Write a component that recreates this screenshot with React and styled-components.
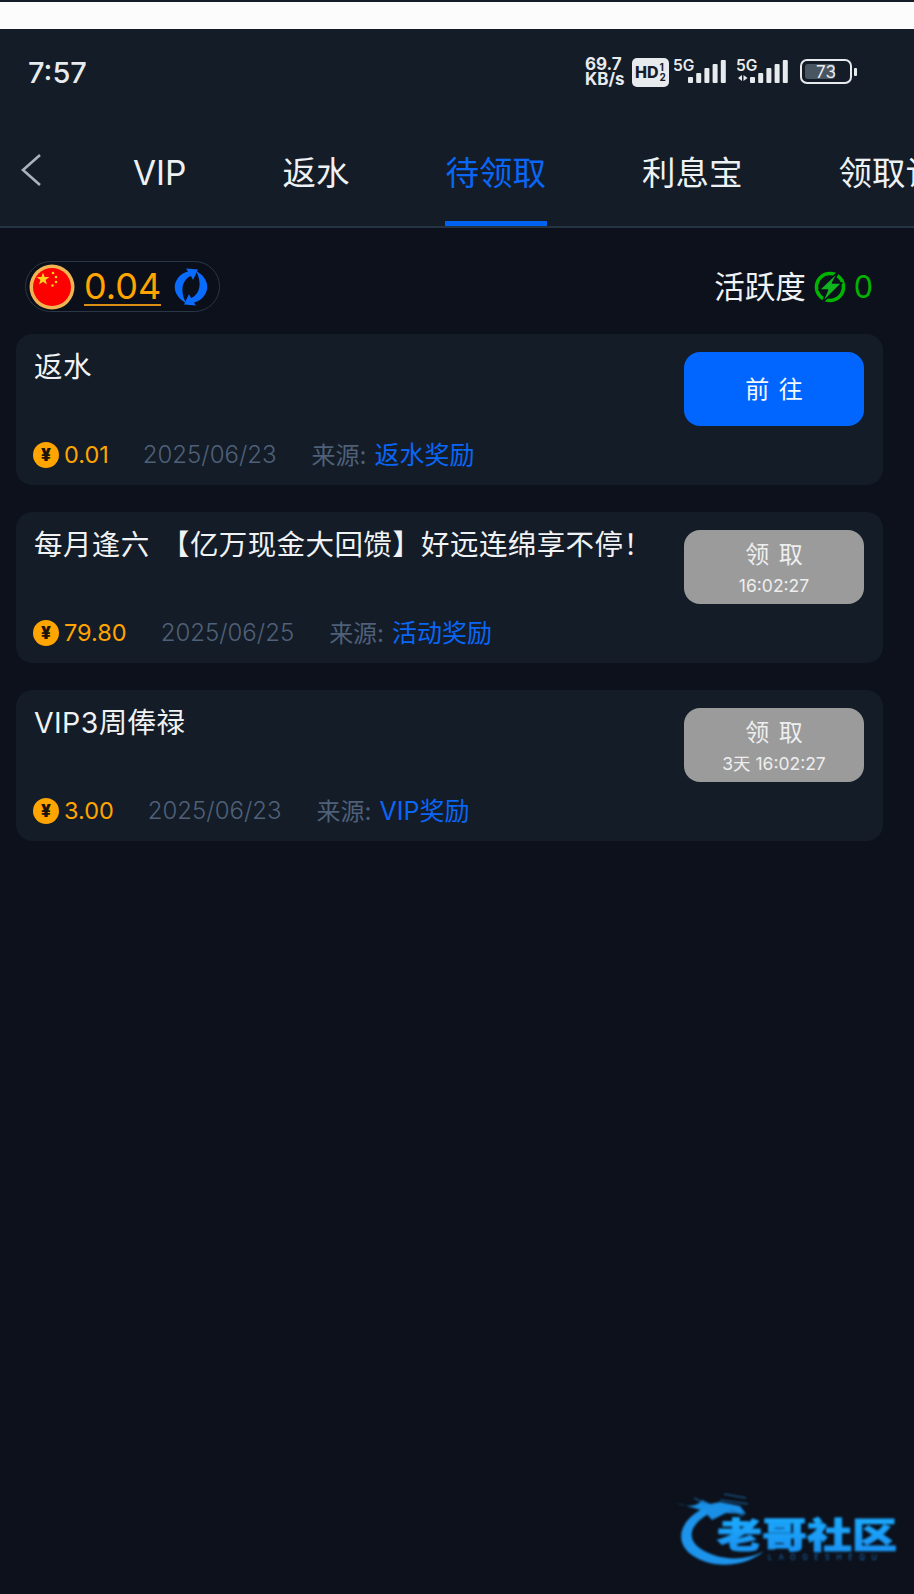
import React from "react";
import styled, { createGlobalStyle } from "styled-components";

const SANS = `Inter, "Noto Sans CJK SC", sans-serif`;

const Global = createGlobalStyle`
  html, body { margin: 0; padding: 0; background: #0c111b; }
  body { font-family: ${SANS}; text-spacing-trim: space-all; }
  * { box-sizing: border-box; }
`;

const Page = styled.div`
  position: relative;
  width: 914px;
  height: 1594px;
  overflow: hidden;
  background: #0c111b;
`;

const TopStrip = styled.div`
  height: 29px;
  background: #fcfcfc;
  border-top: 2px solid #141d29;
`;

const Header = styled.header`
  height: 199px;
  background: #131c27;
  border-bottom: 2px solid #263342;
  display: flex;
  flex-direction: column;
`;

const StatusBar = styled.div`
  height: 86px;
  flex: none;
  display: flex;
  align-items: center;
  justify-content: space-between;
  padding: 0 56px 0 28px;
`;

const Clock = styled.span`
  font-size: 29px;
  font-weight: 500;
  color: #e8ebee;
`;

const StatusIcons = styled.div`
  display: flex;
  align-items: center;
  height: 30px;
`;

const Speed = styled.span`
  display: flex;
  flex-direction: column;
  font-size: 17px;
  line-height: 15px;
  font-weight: 700;
  color: #e8ebee;
  width: 47px;
`;

const HdBadge = styled.span`
  display: flex;
  align-items: center;
  justify-content: center;
  width: 37px;
  height: 29px;
  border-radius: 5px;
  background: #e8ebee;
  color: #141d29;
  font-size: 16px;
  font-weight: 800;
  margin-right: 5px;
`;

const HdFraction = styled.span`
  display: flex;
  flex-direction: column;
  font-size: 10px;
  line-height: 10px;
  font-weight: 700;
  margin-left: 1px;
`;

const TabRow = styled.nav`
  flex: 1;
  position: relative;
  display: flex;
  align-items: stretch;
  padding-left: 133px;
  gap: 96px;
  overflow: hidden;
`;

const BackButton = styled.button`
  position: absolute;
  left: 20px;
  top: 38px;
  padding: 0;
  border: 0;
  background: none;
  display: flex;
`;

const Tab = styled.span`
  flex: none;
  display: flex;
  align-items: center;
  position: relative;
  font-size: 33.5px;
  line-height: 44px;
  padding-top: 4px;
  color: ${(p) => (p.$active ? "#0a66f5" : "#eef1f4")};

  ${(p) =>
    p.$active &&
    `&::after {
      content: "";
      position: absolute;
      left: -1px;
      right: -1px;
      bottom: 0;
      height: 5px;
      background: #0062f0;
    }`}
`;

const Content = styled.main`
  padding: 33px 31px 0 16px;
`;

const BalanceRow = styled.div`
  display: flex;
  align-items: center;
  justify-content: space-between;
  height: 51px;
  padding: 0 10px 0 9px;
  margin-bottom: 22px;
`;

const BalancePill = styled.div`
  display: flex;
  align-items: center;
  width: 195px;
  height: 51px;
  padding-left: 3px;
  border: 1px solid #2a3747;
  border-radius: 26px;
  background: #0b0f19;
`;

const BalanceAmount = styled.span`
  margin: 0 12px 0 9px;
  font-size: 36px;
  font-weight: 400;
  line-height: 36px;
  color: #ffa400;
  border-bottom: 2px solid #d98f14;
`;

const Activity = styled.div`
  display: flex;
  align-items: center;
  gap: 8px;
  height: 44px;
  font-size: 30.5px;
  line-height: 44px;
  color: #f0f2f4;
`;

const ActivityValue = styled.span`
  font-weight: 400;
  color: #00b400;
`;

const CardList = styled.div`
  display: flex;
  flex-direction: column;
  gap: 27px;
`;

const Card = styled.article`
  height: 151px;
  padding: 18px 19px 0 18px;
  border-radius: 16px;
  background: #131c27;
`;

const CardTop = styled.div`
  display: flex;
  justify-content: space-between;
  align-items: flex-start;
  height: 74px;
  margin-bottom: 14px;
`;

const CardTitle = styled.h3`
  margin: 0;
  font-size: 28.5px;
  line-height: 29px;
  font-weight: 400;
  letter-spacing: 0.4px;
  word-spacing: 3px;
  color: #f0f2f4;
  white-space: nowrap;
`;

const ActionButton = styled.button`
  width: 180px;
  height: 74px;
  padding: 2px 0 0;
  border: 0;
  border-radius: 16px;
  flex: none;
  display: flex;
  flex-direction: column;
  align-items: center;
  justify-content: center;
  font-family: ${SANS};
  color: ${(p) => (p.$disabled ? "#eeeeee" : "#f4f8ff")};
  background: ${(p) => (p.$disabled ? "#9b9b9b" : "#0066ff")};
`;

const ActionLabel = styled.span`
  font-size: 24px;
  line-height: 36px;
  word-spacing: 3px;
`;

const Countdown = styled.span`
  font-size: 17.5px;
  font-weight: 400;
  line-height: 26px;
`;

const MetaRow = styled.div`
  display: flex;
  align-items: center;
  height: 30px;
  font-size: 24px;
  font-weight: 300;
  line-height: 30px;
  white-space: nowrap;
`;

const Coin = styled.span`
  width: 26px;
  height: 26px;
  margin-left: -1px;
  border-radius: 50%;
  flex: none;
  display: flex;
  align-items: center;
  justify-content: center;
  background: #ffa400;
  color: #1a1408;
  font-size: 17px;
  font-weight: 900;
`;

const Amount = styled.span`
  margin: 0 34px 0 5px;
  font-size: 23.5px;
  font-weight: 400;
  color: #ffa400;
`;

const DateText = styled.span`
  margin-right: 35px;
  color: #4f6078;
`;

const Source = styled.span`
  font-weight: 400;
  color: #4f6078;
`;

const SourceName = styled.span`
  margin-left: 8px;
  font-size: 25px;
  color: #0a66f5;
`;

const Watermark = styled.svg`
  position: absolute;
  left: 660px;
  top: 1480px;
  filter: blur(0.8px);
`;

const ChevronLeft = () => (
  <svg width="22" height="34" viewBox="0 0 22 34" fill="none">
    <path d="M20 2 L3 17 L20 32" stroke="#a9b3be" strokeWidth="2.6" />
  </svg>
);

const Flag = () => (
  <svg width="46" height="46" viewBox="0 0 46 46">
    <circle cx="23" cy="23" r="22.5" fill="#f0b452" />
    <circle cx="23" cy="23" r="19" fill="#fd0000" />
    <polygon
      points="14,8.5 15.6,13 20.4,13 16.6,15.9 18,20.5 14,17.8 10,20.5 11.4,15.9 7.6,13 12.4,13"
      fill="#ffd21e"
    />
    <circle cx="24" cy="9" r="1.3" fill="#ffd21e" />
    <circle cx="27" cy="13" r="1.3" fill="#ffd21e" />
    <circle cx="27" cy="18" r="1.3" fill="#ffd21e" />
    <circle cx="23.5" cy="21.5" r="1.3" fill="#ffd21e" />
  </svg>
);

const RefreshIcon = () => (
  <svg width="36" height="38" viewBox="0 0 36 38" fill="#0a6cff">
    <path d="M13 35 C3 30 -2 19 5 10 C8 6 12 4 15 3.5 L13 0.5 L25 1.5 L20 12 L18 8 C10 11 6 22 13 35 Z" />
    <path
      transform="rotate(180 18 19)"
      d="M13 35 C3 30 -2 19 5 10 C8 6 12 4 15 3.5 L13 0.5 L25 1.5 L20 12 L18 8 C10 11 6 22 13 35 Z"
    />
  </svg>
);

const BoltIcon = () => (
  <svg width="32" height="32" viewBox="0 0 32 32">
    <circle cx="16" cy="16" r="13.5" fill="none" stroke="#00b400" strokeWidth="3.6" />
    <polygon
      points="25,0 5,19 13.5,19 8,32 28,12 18.5,12"
      fill="#0fb41f"
      stroke="#0c111b"
      strokeWidth="1.6"
      strokeLinejoin="round"
    />
  </svg>
);

const BAR_HEIGHTS = [6, 10, 15, 19, 23];

const SignalIcon = ({ dual }) => {
  const barStart = dual ? 13 : 14;
  return (
    <svg width="63" height="30" viewBox="0 0 63 30" fill="#e8ebee">
      <text x="-1" y="14" fontFamily="Inter, sans-serif" fontSize="15.5" fontWeight="600">
        5G
      </text>
      {dual && <path d="M1 21 L5 18 V24 Z M6.5 18 L10.5 21 L6.5 24 Z" />}
      {BAR_HEIGHTS.map((h, i) => (
        <rect key={h} x={barStart + i * 8.2} y={26 - h} width="5" height={h} rx="1" />
      ))}
    </svg>
  );
};

const BatteryIcon = () => (
  <svg width="58" height="26" viewBox="0 0 58 26">
    <rect x="1" y="1" width="50" height="23" rx="6" fill="none" stroke="#e8ebee" strokeWidth="2" />
    <rect x="5" y="5" width="30" height="15" rx="3" fill="#4a5562" />
    <text
      x="26"
      y="19"
      textAnchor="middle"
      fontFamily="Inter, sans-serif"
      fontSize="17"
      fill="#e8ebee"
    >
      73
    </text>
    <rect x="54" y="9" width="3" height="8" rx="1" fill="#e8ebee" />
  </svg>
);

const CommunityLogo = () => (
  <Watermark width="254" height="100" viewBox="0 0 254 100">
    <defs>
      <linearGradient id="logoFill" x1="0" y1="0" x2="0" y2="1">
        <stop offset="0" stopColor="#1ab4ff" />
        <stop offset="1" stopColor="#1c8cf0" />
      </linearGradient>
    </defs>
    <path
      d="M46 27 C22 38 14 58 28 72 C48 90 85 88 104 71 C85 82 55 81 37 66 C26 55 32 42 54 31 Z"
      fill="#1d94ec"
    />
    <path
      d="M16 23 C28 28 38 26 42 20 L50 24 L60 22 L80 26 L86 34 L66 33 L52 40 L44 31 L34 28 Z"
      fill="#1a8fe6"
    />
    <path
      d="M60 20 L88 24 M64 14 L86 18 M34 18 L46 24 M70 30 L84 36"
      stroke="#1b6eb0"
      strokeWidth="1.2"
      fill="none"
    />
    <text
      x="57"
      y="68"
      textLength="180"
      lengthAdjust="spacingAndGlyphs"
      fontFamily="'Noto Sans CJK SC', sans-serif"
      fontSize="35"
      fontWeight="900"
      fill="url(#logoFill)"
      stroke="#1a9cf6"
      strokeWidth="0.8"
    >
      老哥社区
    </text>
    <text
      x="108"
      y="80"
      textLength="109"
      fontFamily="Inter, sans-serif"
      fontSize="7.5"
      fill="#1a70c0"
    >
      LAOGESHEQU
    </text>
  </Watermark>
);

const TABS = ["VIP", "返水", "待领取", "利息宝", "领取记录"];

const ROWS = [
  {
    title: "返水",
    action: "前 往",
    amount: "0.01",
    date: "2025/06/23",
    source: "返水奖励",
  },
  {
    title: "每月逢六 【亿万现金大回馈】好远连绵享不停！",
    action: "领 取",
    countdown: "16:02:27",
    amount: "79.80",
    date: "2025/06/25",
    source: "活动奖励",
  },
  {
    title: "VIP3周俸禄",
    action: "领 取",
    countdown: "3天 16:02:27",
    amount: "3.00",
    date: "2025/06/23",
    source: "VIP奖励",
  },
];

export default function App() {
  return (
    <Page>
      <Global />
      <TopStrip />
      <Header>
        <StatusBar>
          <Clock>7:57</Clock>
          <StatusIcons>
            <Speed>
              <span>69.7</span>
              <span>KB/s</span>
            </Speed>
            <HdBadge>
              HD
              <HdFraction>
                <span>1</span>
                <span>2</span>
              </HdFraction>
            </HdBadge>
            <SignalIcon />
            <SignalIcon dual />
            <BatteryIcon />
          </StatusIcons>
        </StatusBar>
        <TabRow>
          <BackButton>
            <ChevronLeft />
          </BackButton>
          {TABS.map((tab) => (
            <Tab key={tab} $active={tab === "待领取"}>
              {tab}
            </Tab>
          ))}
        </TabRow>
      </Header>
      <Content>
        <BalanceRow>
          <BalancePill>
            <Flag />
            <BalanceAmount>0.04</BalanceAmount>
            <RefreshIcon />
          </BalancePill>
          <Activity>
            活跃度
            <BoltIcon />
            <ActivityValue>0</ActivityValue>
          </Activity>
        </BalanceRow>
        <CardList>
          {ROWS.map((row) => (
            <Card key={row.title}>
              <CardTop>
                <CardTitle>{row.title}</CardTitle>
                <ActionButton $disabled={Boolean(row.countdown)}>
                  <ActionLabel>{row.action}</ActionLabel>
                  {row.countdown && <Countdown>{row.countdown}</Countdown>}
                </ActionButton>
              </CardTop>
              <MetaRow>
                <Coin>¥</Coin>
                <Amount>{row.amount}</Amount>
                <DateText>{row.date}</DateText>
                <Source>
                  来源:
                  <SourceName>{row.source}</SourceName>
                </Source>
              </MetaRow>
            </Card>
          ))}
        </CardList>
      </Content>
      <CommunityLogo />
    </Page>
  );
}
